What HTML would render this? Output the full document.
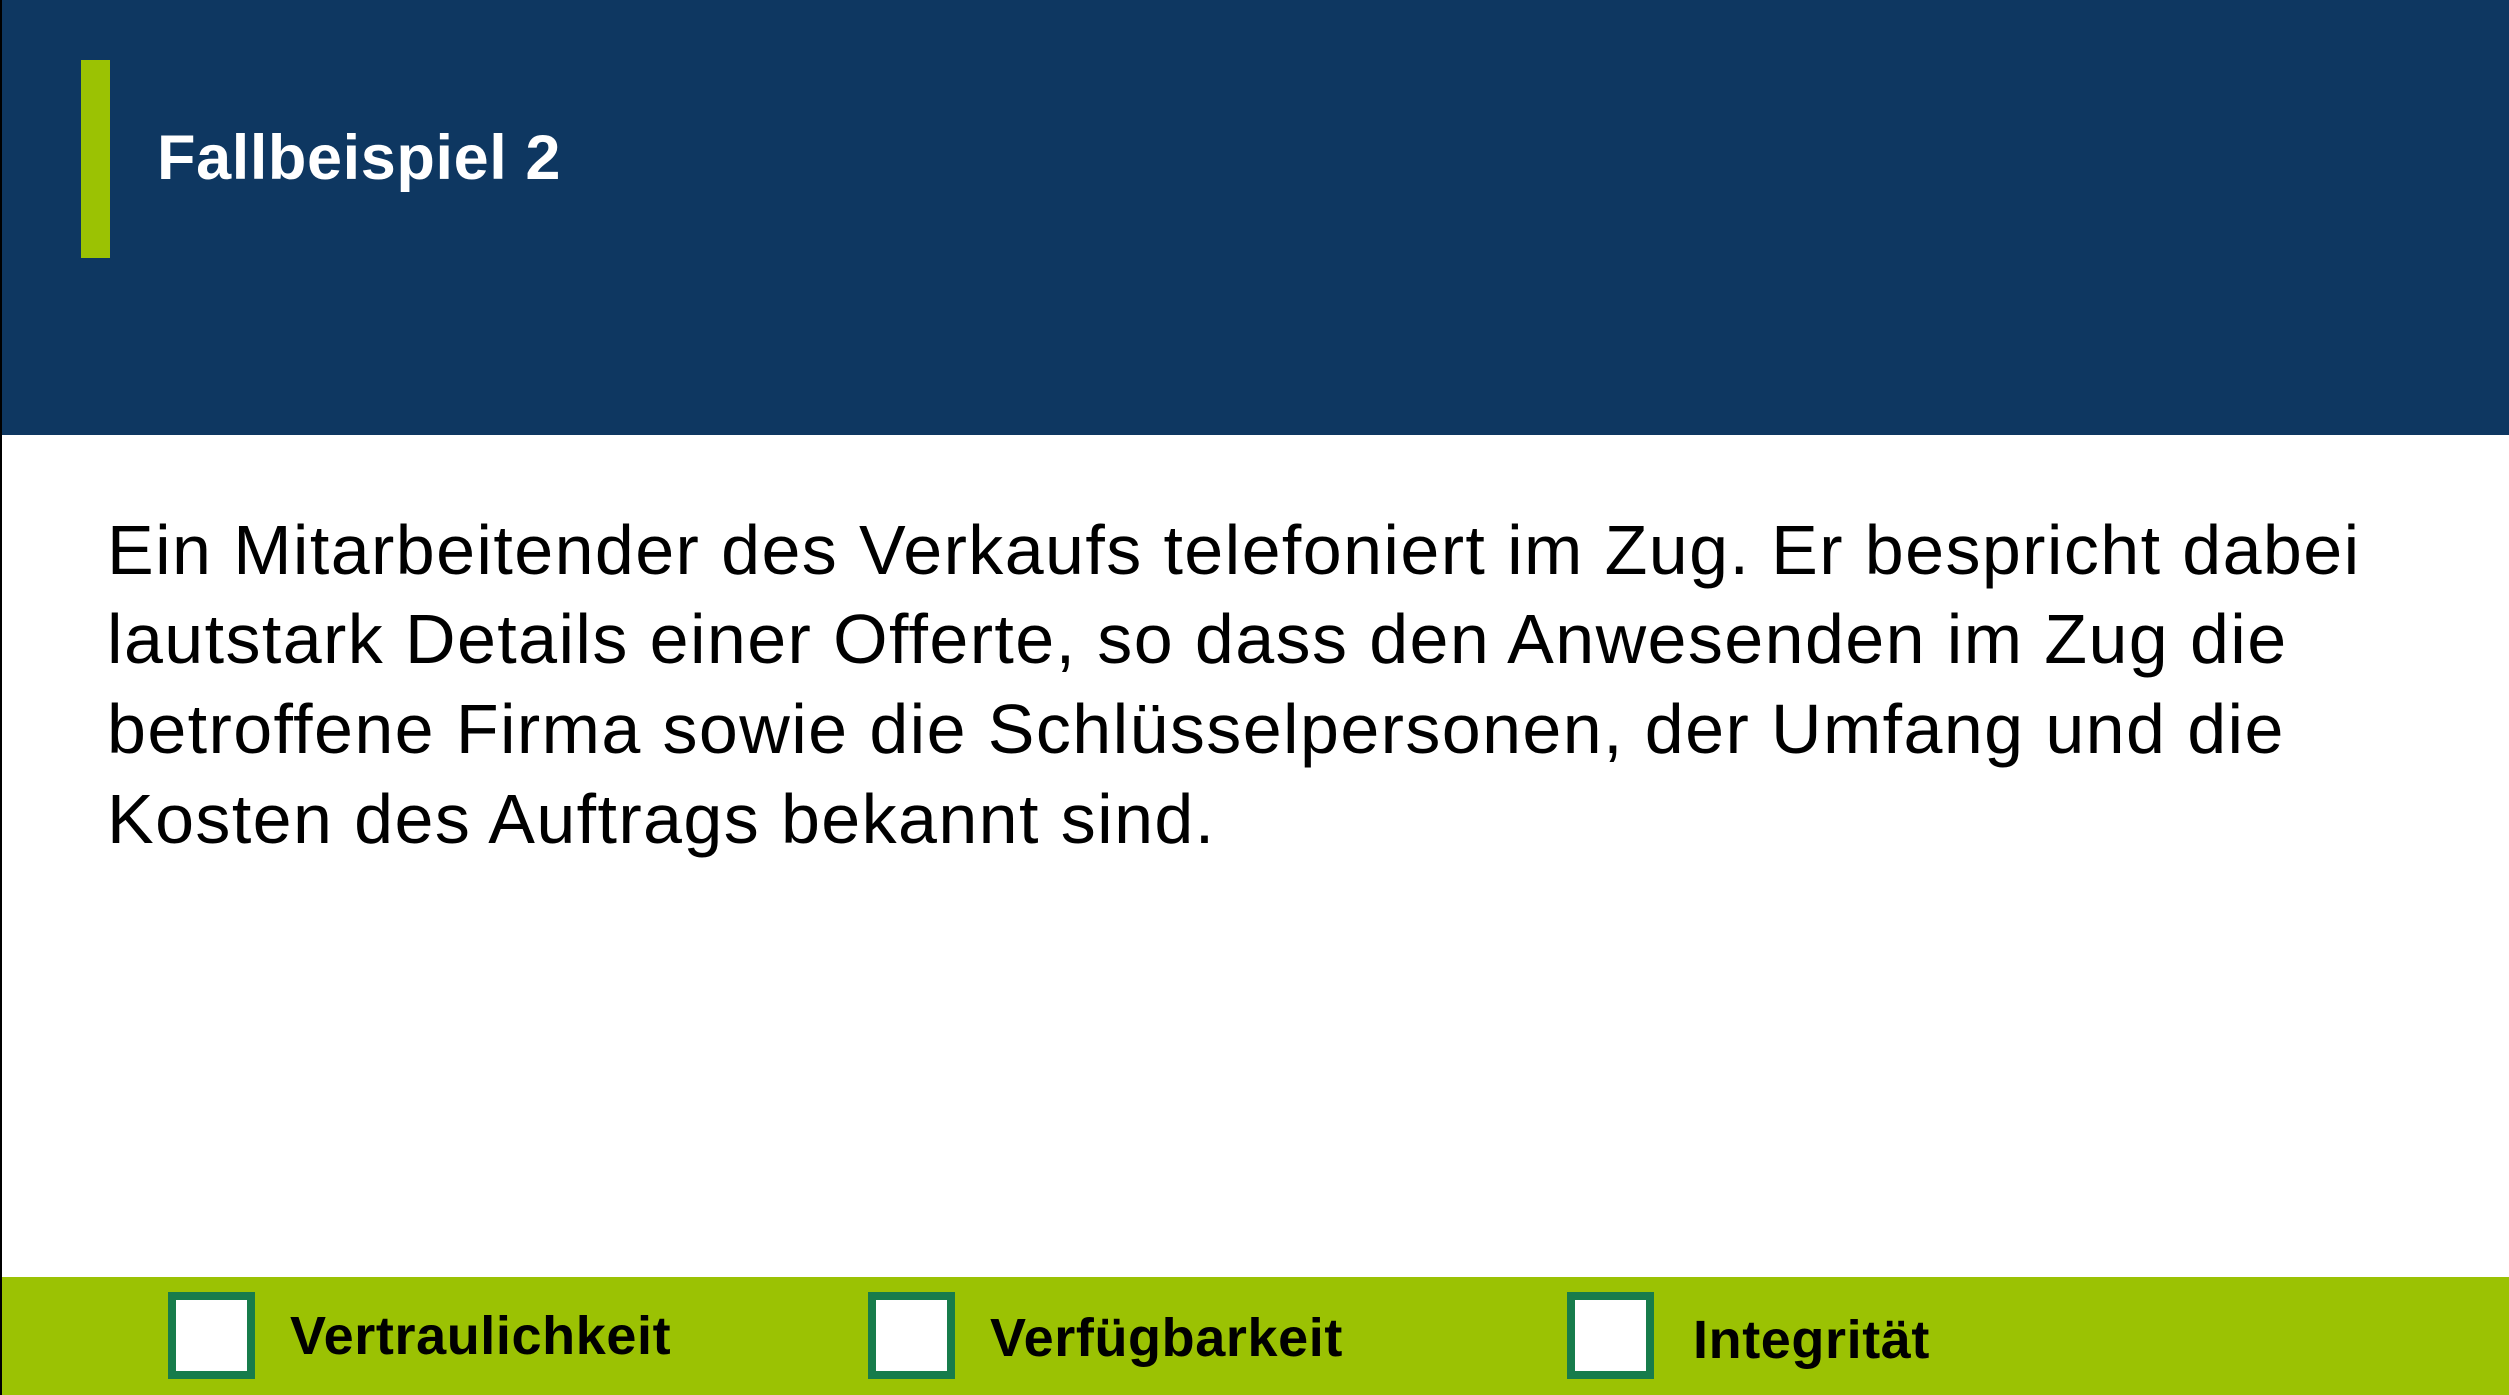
<!DOCTYPE html>
<html><head><meta charset="utf-8"><style>
html,body{margin:0;padding:0}
body{width:2509px;height:1395px;position:relative;overflow:hidden;background:#fff;font-family:"Liberation Sans",sans-serif}
.nav{position:absolute;left:2px;top:0;width:2507px;height:435px;background:#0e3761}
.lb{position:absolute;left:0;top:0;width:2px;height:1395px;background:#000}
.bar{position:absolute;left:81px;top:60px;width:29px;height:198px;background:#9bc203}
.title{position:absolute;left:157px;top:118px;color:#fff;font-weight:bold;font-size:63px;line-height:80px;white-space:nowrap;letter-spacing:0.6px}
.body{position:absolute;left:107px;font-size:70px;letter-spacing:1.4px;color:#000;white-space:nowrap;line-height:1}
.foot{position:absolute;left:2px;top:1277px;width:2507px;height:118px;background:#9bc203}
.cb{position:absolute;top:1292px;width:71px;height:71px;border:8px solid #177c4b;background:#fff}
.lab{position:absolute;font-weight:bold;font-size:54px;color:#000;white-space:nowrap;line-height:1;letter-spacing:0.6px}
</style></head><body>
<div class="nav"></div>
<div class="lb"></div>
<div class="bar"></div>
<div class="title">Fallbeispiel 2</div>
<div class="body" style="top:515px">Ein Mitarbeitender des Verkaufs telefoniert im Zug. Er bespricht dabei</div>
<div class="body" style="top:604px">lautstark Details einer Offerte, so dass den Anwesenden im Zug die</div>
<div class="body" style="top:694px">betroffene Firma sowie die Schlüsselpersonen, der Umfang und die</div>
<div class="body" style="top:784px">Kosten des Auftrags bekannt sind.</div>
<div class="foot"></div>
<div class="cb" style="left:168px"></div>
<div class="cb" style="left:868px"></div>
<div class="cb" style="left:1567px"></div>
<div class="lab" style="left:290px;top:1309px">Vertraulichkeit</div>
<div class="lab" style="left:990px;top:1311px">Verfügbarkeit</div>
<div class="lab" style="left:1693px;top:1313px">Integrität</div>
</body></html>
